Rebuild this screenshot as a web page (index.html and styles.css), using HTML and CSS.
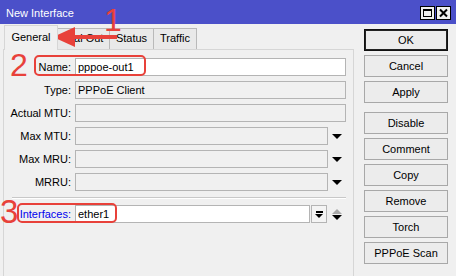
FILE: index.html
```html
<!DOCTYPE html>
<html lang="en">
<head>
    <meta charset="UTF-8">
    <title>New Interface</title>
    <link rel="stylesheet" href="styles.css">
</head>
<body>
    <div class="window">
        <div class="titlebar">
            <span class="title">New Interface</span>
            <div class="win-btns">
                <span class="wbtn">
                    <svg width="13" height="12" viewBox="0 0 13 12"><rect x="2.5" y="2.5" width="8" height="7" fill="none" stroke="#000"/><rect x="2" y="2" width="9" height="2" fill="#000"/></svg>
                </span>
                <span class="wbtn">
                    <svg width="13" height="12" viewBox="0 0 13 12"><path d="M3 2.5 L10 9.5 M10 2.5 L3 9.5" stroke="#000" stroke-width="2"/></svg>
                </span>
            </div>
        </div>

        <div class="body">
            <div class="main">
                <div class="tabs">
                    <div class="tab active">General</div>
                    <div class="tab">Dial Out</div>
                    <div class="tab">Status</div>
                    <div class="tab">Traffic</div>
                </div>

                <div class="panel">
                    <div class="row">
                        <span class="lbl">Name:</span>
                        <div class="field edit">pppoe-out1</div>
                    </div>
                    <div class="row">
                        <span class="lbl">Type:</span>
                        <div class="field">PPPoE Client</div>
                    </div>
                    <div class="row">
                        <span class="lbl">Actual MTU:</span>
                        <div class="field"></div>
                    </div>
                    <div class="row">
                        <span class="lbl">Max MTU:</span>
                        <div class="field"></div>
                        <span class="dd"><i class="tri-down"></i></span>
                    </div>
                    <div class="row">
                        <span class="lbl">Max MRU:</span>
                        <div class="field"></div>
                        <span class="dd"><i class="tri-down"></i></span>
                    </div>
                    <div class="row">
                        <span class="lbl">MRRU:</span>
                        <div class="field"></div>
                        <span class="dd"><i class="tri-down"></i></span>
                    </div>

                    <div class="separator"></div>

                    <div class="row">
                        <span class="lbl link">Interfaces:</span>
                        <div class="field edit">ether1</div>
                        <span class="pick"><i class="bar"></i><i class="tri-down small"></i></span>
                        <span class="dd updown"><i class="tri-up"></i><i class="tri-down"></i></span>
                    </div>
                </div>
            </div>

            <div class="side">
                <button class="btn default">OK</button>
                <button class="btn">Cancel</button>
                <button class="btn">Apply</button>
                <button class="btn group">Disable</button>
                <button class="btn">Comment</button>
                <button class="btn">Copy</button>
                <button class="btn">Remove</button>
                <button class="btn">Torch</button>
                <button class="btn">PPPoE Scan</button>
            </div>
        </div>

        <!-- red markup drawn over the window -->
        <svg class="marks" width="456" height="276" viewBox="0 0 456 276">
            <polygon points="53,37 75,27 75,47" fill="#e8413a"/>
            <rect x="73" y="35" width="44" height="4" fill="#e8413a"/>
            <rect x="35" y="56" width="110" height="19" rx="4" fill="none" stroke="#e8413a" stroke-width="2"/>
            <rect x="18" y="204" width="98" height="18" rx="4" fill="none" stroke="#e8413a" stroke-width="2"/>
        </svg>
        <span class="num n1">1</span>
        <span class="num n2">2</span>
        <span class="num n3">3</span>
    </div>
</body>
</html>
```

FILE: styles.css
```css
* {
    margin: 0;
    padding: 0;
    box-sizing: border-box;
}

body {
    font-family: 'Liberation Sans', Arial, sans-serif;
    font-size: 11px;
    color: #000;
    background: #f0f0f0;
}

.window {
    position: relative;
    width: 456px;
    height: 276px;
    overflow: hidden;
    background: #f0f0f0;
}

.titlebar {
    height: 24px;
    background: #4b50c9;
    display: flex;
    align-items: center;
    justify-content: space-between;
    padding: 0 5px 0 6px;
    color: white;
}

.title {
    font-size: 11px;
    padding-top: 1px;
}

.win-btns {
    display: flex;
    gap: 1px;
    padding-top: 2px;
}

.wbtn {
    width: 15px;
    height: 14px;
    background: #f0f0f0;
    border: 1px solid #000;
    display: flex;
    align-items: center;
    justify-content: center;
}

.body {
    display: flex;
}

.main {
    width: 354px;
    padding-left: 3px;
}

/* tabs */
.tabs {
    height: 25px;
    display: flex;
    align-items: flex-end;
    padding-left: 1px;
}

.tab {
    height: 21px;
    line-height: 19px;
    text-align: center;
    background: #e9e9e9;
    border: 1px solid #b9b9b9;
    border-bottom: none;
    margin-left: -1px;
}

.tab:nth-child(2) { width: 53px; }
.tab:nth-child(3) { width: 45px; }
.tab:nth-child(4) { width: 44px; }

.tab.active {
    width: 54px;
    height: 25px;
    line-height: 23px;
    margin-left: 0;
    margin-bottom: -1px;
    background: #f0f0f0;
    border-color: #d6d6d6;
    position: relative;
    z-index: 1;
}

.panel {
    width: 351px;
    height: 240px;
    border: 1px solid #d6d6d6;
    border-bottom: none;
    padding: 8px 7px 0 0;
    display: flex;
    flex-direction: column;
    gap: 5px;
}

.row {
    display: flex;
    align-items: center;
    height: 18px;
}

.lbl {
    width: 67px;
    margin-right: 4px;
    text-align: right;
    white-space: nowrap;
}

.lbl.link {
    color: #0000ee;
}

.field {
    flex: 1;
    height: 18px;
    border: 1px solid #b4b4b4;
    background: #f0f0f0;
    padding-left: 2px;
    line-height: 16px;
    white-space: nowrap;
}

.field.edit {
    background: #fff;
}

.dd {
    width: 18px;
    height: 18px;
    display: flex;
    flex-direction: column;
    align-items: center;
    justify-content: center;
}

.tri-down {
    display: block;
    width: 0;
    height: 0;
    border-left: 5px solid transparent;
    border-right: 5px solid transparent;
    border-top: 5px solid #000;
}

.tri-down.small {
    border-left-width: 4px;
    border-right-width: 4px;
    border-top-width: 4px;
}

.tri-up {
    display: block;
    width: 0;
    height: 0;
    border-left: 5px solid transparent;
    border-right: 5px solid transparent;
    border-bottom: 5px solid #a8a8a8;
    margin-bottom: 1px;
}

.pick {
    width: 16px;
    height: 18px;
    margin: 0 1px;
    border: 1px solid #b4b4b4;
    background: #f4f4f4;
    display: flex;
    flex-direction: column;
    align-items: center;
    justify-content: center;
}

.pick .bar {
    display: block;
    width: 7px;
    height: 2px;
    background: #000;
    margin-bottom: 1px;
}

.separator {
    height: 2px;
    margin: 1px 0 1px 8px;
    border-top: 1px solid #c8c8c8;
    border-bottom: 1px solid #fff;
}

/* right button column */
.side {
    width: 84px;
    margin-left: 10px;
    padding-top: 5px;
    display: flex;
    flex-direction: column;
    gap: 4px;
}

.btn {
    height: 22px;
    font-family: inherit;
    font-size: 11px;
    background: #ececec;
    border: 1px solid #a8a8a8;
    color: #000;
}

.btn.default {
    border-color: #111;
    box-shadow: inset 0 0 0 1px #222;
}

.btn.group {
    margin-top: 5px;
}

/* annotations */
.marks {
    position: absolute;
    left: 0;
    top: 0;
    pointer-events: none;
}

.num {
    position: absolute;
    font-family: 'Liberation Sans', Arial, sans-serif;
    font-size: 32px;
    line-height: 32px;
    color: #e8413a;
}

.n1 { left: 104px; top: 4px; }
.n2 { left: 10px; top: 49px; }
.n3 { left: 0; top: 196px; font-size: 33px; }
```
